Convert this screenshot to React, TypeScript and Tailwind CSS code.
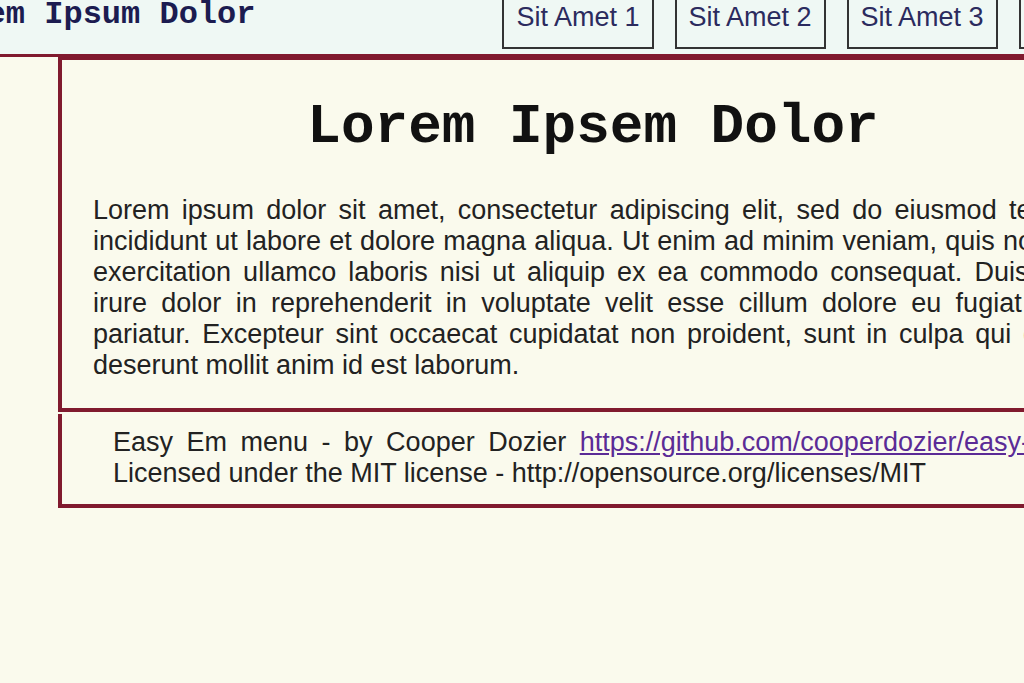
import React from "react";

const MONO = "font-['Liberation_Mono','Courier_New',monospace]";

export default function App() {
  const items = ["Sit Amet 1", "Sit Amet 2", "Sit Amet 3", "Sit Amet 4"];
  return (
    <div className="w-[1024px] h-[683px] overflow-hidden bg-[#fafaed] font-['Liberation_Sans',Arial,sans-serif]">
      <div className="w-[1400px]">
        <header className="flex items-start h-[57px] w-[1400px] border-b-[3px] border-[#801a2e] bg-[#eff8f4]">
          <div
            className={`${MONO} -ml-[71px] -mt-[3px] shrink-0 whitespace-nowrap text-[32px] leading-[36px] font-bold text-[#1c1c50]`}
          >
            Lorem Ipsum Dolor
          </div>
          <nav className="ml-[247px] -mt-[16px] flex items-start gap-[21px] shrink-0">
            {items.map((t) => (
              <a
                key={t}
                className="block whitespace-nowrap border-2 border-[#333] bg-[#eff8f4] px-[12px] pt-[16px] pb-[14px] text-[27px] leading-[31px] text-[#2b2b5e]"
              >
                {t}
              </a>
            ))}
          </nav>
        </header>

        <main className="ml-[58px] w-[1070px] border-t-[3px] border-l-4 border-r-4 border-b-4 border-[#801a2e] px-[31px] pt-[35px] pb-[27px]">
          <h1 className={`${MONO} text-center text-[56px] leading-[64px] font-bold text-[#111]`}>
            Lorem Ipsem Dolor
          </h1>
          <p className="mt-[36px] text-justify text-[27px] leading-[31px] text-[#222]">
            Lorem ipsum dolor sit amet, consectetur adipiscing elit, sed do eiusmod tempor
            incididunt ut labore et dolore magna aliqua. Ut enim ad minim veniam, quis nostrud
            exercitation ullamco laboris nisi ut aliquip ex ea commodo consequat. Duis aute irure
            dolor in reprehenderit in voluptate velit esse cillum dolore eu fugiat nulla pariatur.
            Excepteur sint occaecat cupidatat non proident, sunt in culpa qui officia deserunt
            mollit anim id est laborum.
          </p>
        </main>

        <footer className="mt-[2px] ml-[58px] w-[1141px] border-l-4 border-r-4 border-b-4 border-[#801a2e] pl-[51px] pr-[51px] pt-[13px] pb-[15px]">
          <p className="text-justify text-[27px] leading-[31px] text-[#222]">
            Easy Em menu - by Cooper Dozier{" "}
            <a className="text-[#5b2b96] underline">https://github.com/cooperdozier/easy-em-menu</a>{" "}
            Licensed under the MIT license - http://opensource.org/licenses/MIT
          </p>
        </footer>
      </div>
    </div>
  );
}
